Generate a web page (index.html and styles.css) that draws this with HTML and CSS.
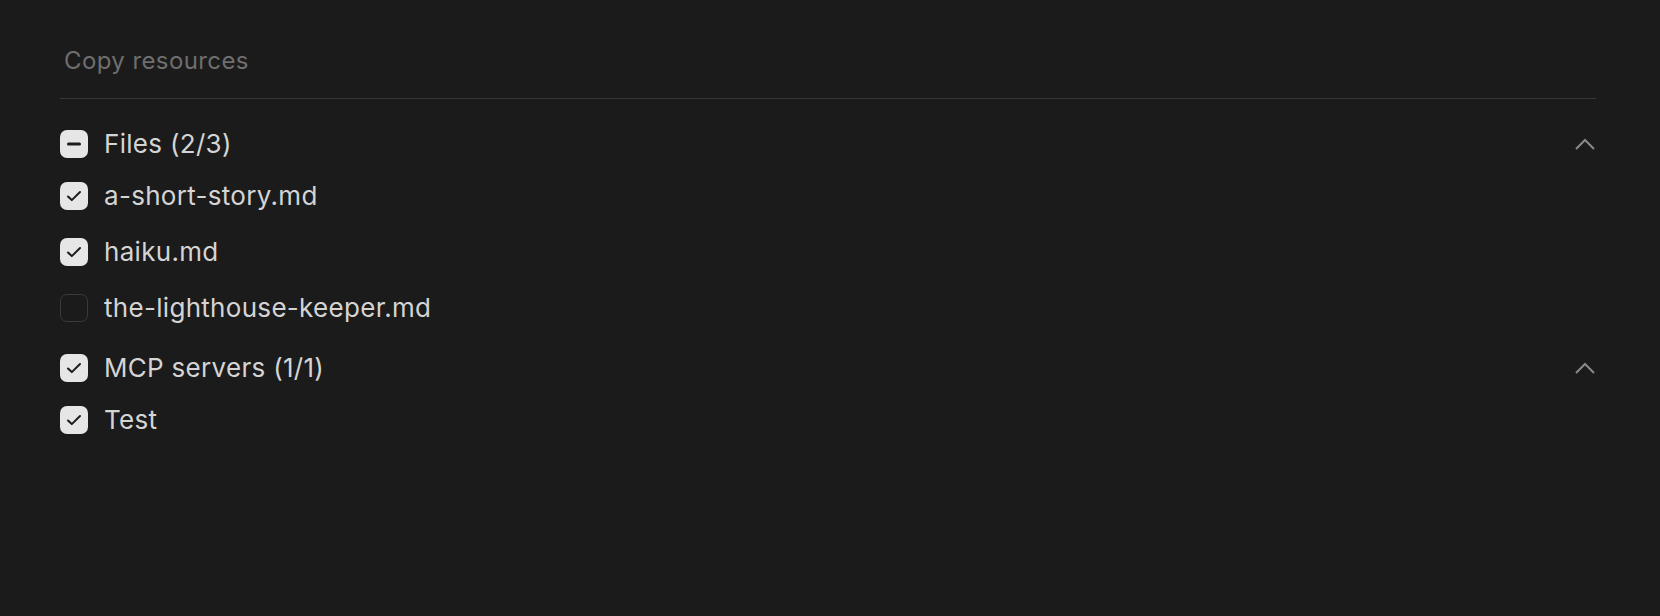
FILE: index.html
```html
<!DOCTYPE html>
<html>
<head>
<meta charset="utf-8">
<link rel="stylesheet" href="styles.css">
</head>
<body>
<div class="panel">
  <div class="title">Copy resources</div>
  <div class="divider"></div>
  <div class="groups">
    <div class="group">
      <div class="row head">
        <span class="box on"><svg viewBox="0 0 28 28"><path d="M8.5 14h11" stroke="#1c1c1c" stroke-width="3" stroke-linecap="round"/></svg></span>
        <span class="label">Files (2/3)</span>
        <svg class="chev" viewBox="0 0 20 12"><path d="M1 11L10 2l9 9" fill="none" stroke="#8a8a8a" stroke-width="2"/></svg>
      </div>
      <div class="items">
        <div class="row">
          <span class="box on"><svg viewBox="0 0 28 28"><path d="M8 14.5l3.8 3.6L20 10" fill="none" stroke="#1c1c1c" stroke-width="2" stroke-linecap="round" stroke-linejoin="round"/></svg></span>
          <span class="label">a-short-story.md</span>
        </div>
        <div class="row">
          <span class="box on"><svg viewBox="0 0 28 28"><path d="M8 14.5l3.8 3.6L20 10" fill="none" stroke="#1c1c1c" stroke-width="2" stroke-linecap="round" stroke-linejoin="round"/></svg></span>
          <span class="label">haiku.md</span>
        </div>
        <div class="row">
          <span class="box off"></span>
          <span class="label">the-lighthouse-keeper.md</span>
        </div>
      </div>
    </div>
    <div class="group">
      <div class="row head">
        <span class="box on"><svg viewBox="0 0 28 28"><path d="M8 14.5l3.8 3.6L20 10" fill="none" stroke="#1c1c1c" stroke-width="2" stroke-linecap="round" stroke-linejoin="round"/></svg></span>
        <span class="label">MCP servers (1/1)</span>
        <svg class="chev" viewBox="0 0 20 12"><path d="M1 11L10 2l9 9" fill="none" stroke="#8a8a8a" stroke-width="2"/></svg>
      </div>
      <div class="items">
        <div class="row">
          <span class="box on"><svg viewBox="0 0 28 28"><path d="M8 14.5l3.8 3.6L20 10" fill="none" stroke="#1c1c1c" stroke-width="2" stroke-linecap="round" stroke-linejoin="round"/></svg></span>
          <span class="label">Test</span>
        </div>
      </div>
    </div>
  </div>
</div>
</body>
</html>
```

FILE: styles.css
```css
html, body {
  margin: 0;
  padding: 0;
  background: #1b1b1b;
  height: 100%;
}
body {
  font-family: Inter, "Noto Sans", sans-serif;
  color: #d4d4d4;
}
.panel {
  padding: 45px 64px 0 60px;
}
.title {
  font-size: 24px;
  line-height: 32px;
  color: #6e6e6e;
  padding-left: 4px;
  letter-spacing: 0.4px;
}
.divider {
  height: 1px;
  background: #363636;
  margin-top: 21px;
}
.groups {
  display: flex;
  flex-direction: column;
  gap: 32px;
  margin-top: 31px;
}
.group {
  display: flex;
  flex-direction: column;
  gap: 24px;
}
.items {
  display: flex;
  flex-direction: column;
  gap: 28px;
}
.row {
  display: flex;
  align-items: center;
  height: 28px;
}
.box {
  width: 28px;
  height: 28px;
  box-sizing: border-box;
  border-radius: 7px;
  flex: none;
  display: flex;
}
.box svg {
  width: 28px;
  height: 28px;
}
.box.on {
  background: #e6e6e6;
}
.box.off {
  border: 1.5px solid #3a3a3a;
}
.label {
  margin-left: 16px;
  font-size: 26px;
  line-height: 28px;
  letter-spacing: 0.3px;
}
.chev {
  margin-left: auto;
  width: 20px;
  height: 12px;
  margin-right: 1px;
}
```
